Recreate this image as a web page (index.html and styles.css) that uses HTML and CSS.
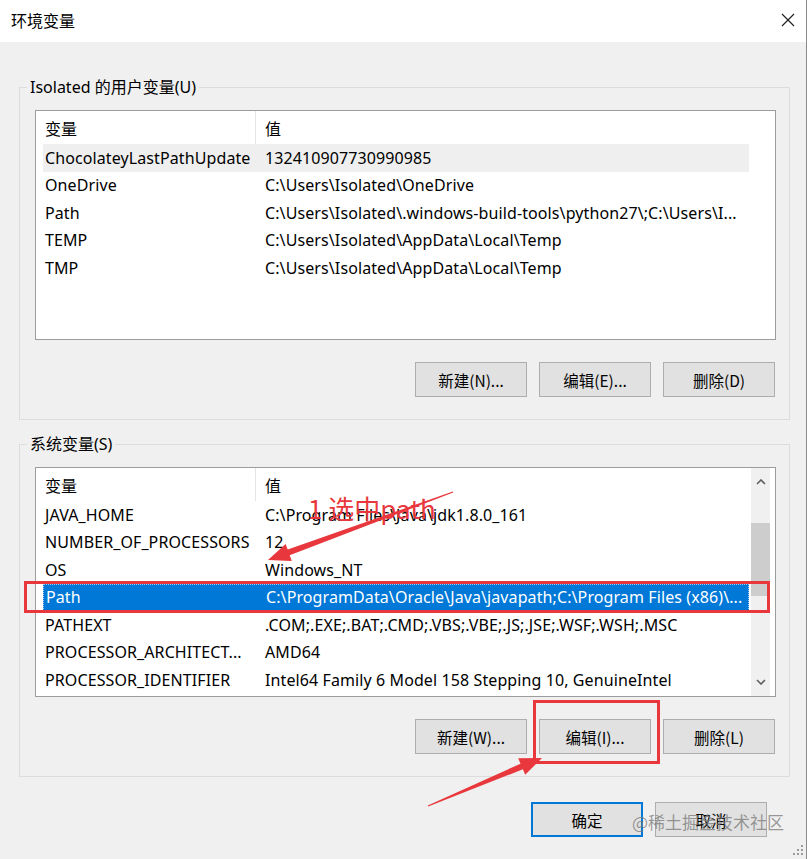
FILE: index.html
```html
<!DOCTYPE html>
<html lang="zh">
<head>
<meta charset="utf-8">
<title>环境变量</title>
<link rel="stylesheet" href="styles.css">
</head>
<body>
<div class="window">
  <div class="titlebar">
    <span class="title">环境变量</span>
    <svg class="close" width="14" height="14" viewBox="0 0 14 14"><path d="M1 1L13 13M13 1L1 13" stroke="#222" stroke-width="1.2" fill="none"/></svg>
  </div>
  <div class="content">
    <section class="group">
      <div class="group-title">Isolated 的用户变量(U)</div>
      <div class="list">
        <div class="list-main">
          <div class="row head"><div class="c1">变量</div><div class="c2">值</div></div>
          <div class="row soft"><div class="c1">ChocolateyLastPathUpdate</div><div class="c2">132410907730990985</div></div>
          <div class="row"><div class="c1">OneDrive</div><div class="c2">C:\Users\Isolated\OneDrive</div></div>
          <div class="row"><div class="c1">Path</div><div class="c2">C:\Users\Isolated\.windows-build-tools\python27\;C:\Users\I...</div></div>
          <div class="row"><div class="c1">TEMP</div><div class="c2">C:\Users\Isolated\AppData\Local\Temp</div></div>
          <div class="row"><div class="c1">TMP</div><div class="c2">C:\Users\Isolated\AppData\Local\Temp</div></div>
        </div>
      </div>
      <div class="buttons">
        <button class="btn">新建(N)...</button>
        <button class="btn">编辑(E)...</button>
        <button class="btn">删除(D)</button>
      </div>
    </section>

    <section class="group sys">
      <div class="group-title">系统变量(S)</div>
      <div class="list">
        <div class="list-main">
          <div class="row head"><div class="c1">变量</div><div class="c2">值</div></div>
          <div class="row"><div class="c1">JAVA_HOME</div><div class="c2">C:\Program Files\Java\jdk1.8.0_161</div></div>
          <div class="row"><div class="c1">NUMBER_OF_PROCESSORS</div><div class="c2">12</div></div>
          <div class="row"><div class="c1">OS</div><div class="c2">Windows_NT</div></div>
          <div class="row selected"><div class="c1">Path</div><div class="c2">C:\ProgramData\Oracle\Java\javapath;C:\Program Files (x86)\...</div></div>
          <div class="row"><div class="c1">PATHEXT</div><div class="c2">.COM;.EXE;.BAT;.CMD;.VBS;.VBE;.JS;.JSE;.WSF;.WSH;.MSC</div></div>
          <div class="row"><div class="c1">PROCESSOR_ARCHITECT...</div><div class="c2">AMD64</div></div>
          <div class="row"><div class="c1">PROCESSOR_IDENTIFIER</div><div class="c2">Intel64 Family 6 Model 158 Stepping 10, GenuineIntel</div></div>
        </div>
        <div class="scrollbar">
          <div class="arrow"><svg width="10" height="6" viewBox="0 0 10 6"><path d="M1 5L5 1L9 5" stroke="#606060" stroke-width="1.6" fill="none"/></svg></div>
          <div class="thumb"></div>
          <div class="track-rest"></div>
          <div class="arrow"><svg width="10" height="6" viewBox="0 0 10 6"><path d="M1 1L5 5L9 1" stroke="#606060" stroke-width="1.6" fill="none"/></svg></div>
        </div>
      </div>
      <div class="buttons">
        <button class="btn">新建(W)...</button>
        <button class="btn">编辑(I)...</button>
        <button class="btn">删除(L)</button>
      </div>
    </section>

    <div class="footer">
      <button class="btn primary">确定</button>
      <button class="btn">取消</button>
    </div>
  </div>

  <svg class="annot" width="808" height="859" viewBox="0 0 808 859">
    <rect x="25.5" y="582.5" width="743" height="29" fill="none" stroke="#e8383d" stroke-width="3"/>
    <rect x="534.5" y="701.5" width="124" height="61" fill="none" stroke="#e8383d" stroke-width="3"/>
    <text x="308" y="519" class="note">1 选中path</text>
    <polygon fill="#e8383d" points="268,560 291.8,560.9 289.7,555.2 453.2,492.5 452.8,491.5 287.7,549.6 285.6,543.9"/>
    <polygon fill="#e8383d" points="542,758 525.2,774.8 522.9,769.3 428.2,806.5 427.8,805.5 520.5,763.7 518.2,758.2"/>
    <g fill="#9a9a9a">
      <rect x="801" y="845" width="2" height="2"/>
      <rect x="797" y="849" width="2" height="2"/>
      <rect x="801" y="849" width="2" height="2"/>
      <rect x="793" y="853" width="2" height="2"/>
      <rect x="797" y="853" width="2" height="2"/>
      <rect x="801" y="853" width="2" height="2"/>
    </g>
  </svg>
  <div class="watermark">@稀土掘金技术社区</div>
</div>
</body>
</html>
```

FILE: styles.css
```css
html, body {
  margin: 0;
  padding: 0;
  background: #ffffff;
}

body {
  font-family: "Noto Sans", "Noto Sans CJK SC", sans-serif;
  color: #000;
}

.window {
  position: relative;
  width: 807px;
  height: 859px;
  box-sizing: border-box;
  border-right: 1px solid #8c8c8c;
  background: #f0f0f0;
  overflow: hidden;
}

.titlebar {
  height: 42px;
  background: #ffffff;
  display: flex;
  align-items: center;
  justify-content: space-between;
  padding: 0 11px 0 11px;
}

.title {
  font-family: "Noto Sans CJK SC", sans-serif;
  font-size: 16px;
  line-height: 20px;
  margin-top: -2px;
}

.close {
  display: block;
  margin-top: -2px;
}

.content {
  padding: 45px 16px 0 19px;
}

.group {
  border: 1px solid #dcdcdc;
  padding: 0 13px 22px 15px;
}

.group.sys {
  margin-top: 24px;
}

.group-title {
  width: fit-content;
  margin: -11px 0 0 -8px;
  padding: 0 3px;
  background: #f0f0f0;
  font-family: "Noto Sans", "Noto Sans CJK SC", sans-serif;
  font-size: 16px;
  line-height: 20px;
}

.list {
  margin-top: 13px;
  height: 230px;
  box-sizing: border-box;
  border: 1px solid #9c9c9c;
  background: #ffffff;
  display: flex;
  padding-left: 7px;
  overflow: hidden;
}

.list-main {
  width: 706px;
  flex: none;
}

.row {
  display: flex;
  align-items: center;
  height: 27.5px;
  font-size: 16px;
  letter-spacing: 0.1px;
  white-space: nowrap;
  box-sizing: border-box;
}

.row.head {
  height: 33px;
  align-items: stretch;
  letter-spacing: 0;
}

.row.head .c1,
.row.head .c2 {
  display: flex;
  align-items: center;
  font-family: "Noto Sans CJK SC", sans-serif;
}

.row.head .c1 {
  border-right: 1px solid #e5e5e5;
}

.c1 {
  width: 213px;
  flex: none;
  box-sizing: border-box;
  padding-left: 2px;
  overflow: hidden;
}

.c2 {
  flex: 1;
  padding-left: 9px;
  overflow: hidden;
}

.row.soft {
  background: #efefef;
}

.row.selected {
  background: #0078d7;
  color: #ffffff;
  border: 1px dotted #9fc9ee;
}

.scrollbar {
  margin-left: 2px;
  width: 19px;
  flex: none;
  background: #f0f0f0;
  display: flex;
  flex-direction: column;
}

.arrow {
  height: 28px;
  display: flex;
  align-items: center;
  justify-content: center;
  flex: none;
}

.thumb {
  margin-top: 27px;
  height: 73px;
  background: #cdcdcd;
  flex: none;
}

.track-rest {
  flex: 1;
}

.buttons {
  display: flex;
  justify-content: flex-end;
  gap: 12px;
  margin-top: 22px;
  padding-right: 1px;
}

.btn {
  width: 112px;
  height: 35px;
  box-sizing: border-box;
  border: 1px solid #adadad;
  background: #e1e1e1;
  font-family: "Noto Sans CJK SC", sans-serif;
  font-size: 15.5px;
  color: #000;
  padding: 0;
  margin: 0;
}

.btn.primary {
  border: 2px solid #0078d7;
}

.footer {
  display: flex;
  justify-content: flex-end;
  gap: 12px;
  margin-top: 25px;
  padding-right: 23px;
}

.annot {
  position: absolute;
  left: 0;
  top: 0;
  pointer-events: none;
}

.note {
  font-family: "Noto Sans CJK SC", sans-serif;
  font-size: 26px;
  fill: #e8383d;
}

.watermark {
  position: absolute;
  left: 632px;
  top: 810px;
  font-family: "Noto Sans CJK SC", sans-serif;
  font-size: 17px;
  line-height: 24px;
  color: rgba(120, 120, 120, 0.75);
  pointer-events: none;
}
```
